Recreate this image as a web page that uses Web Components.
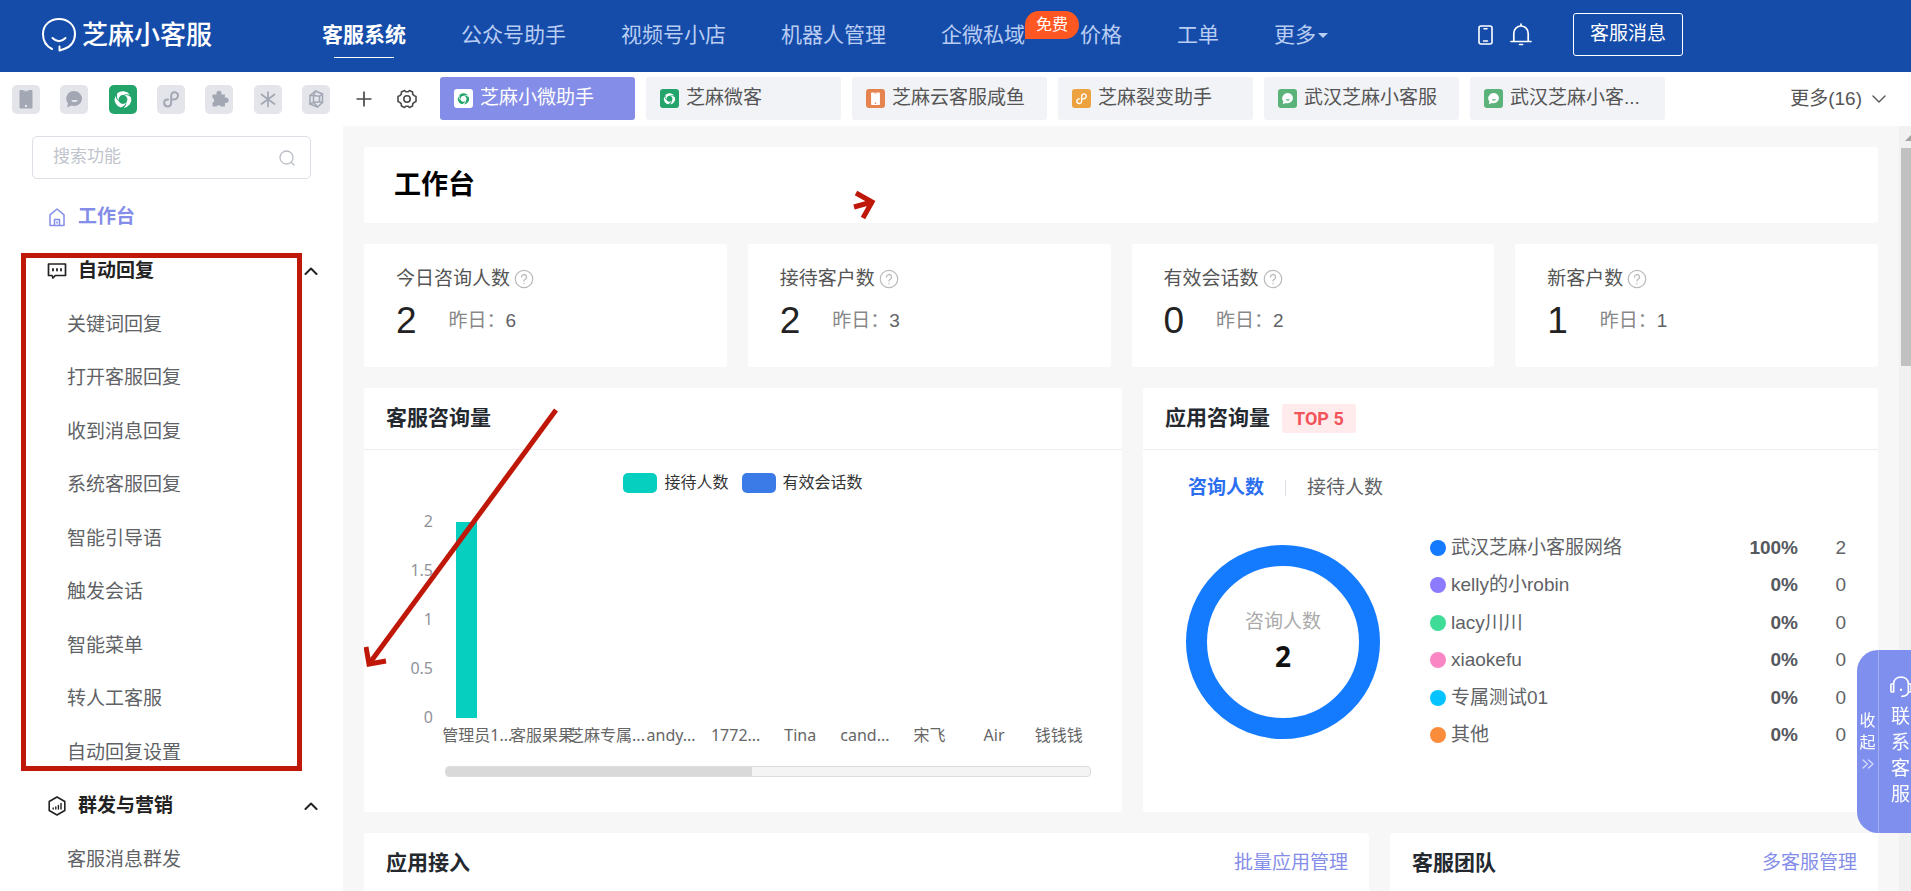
<!DOCTYPE html>
<html lang="zh-CN">
<head>
<meta charset="utf-8">
<title>芝麻小客服</title>
<style>
  html, body { margin: 0; height: 100%; }
  body {
    overflow: hidden;
    background: #fff;
    color: #606266;
    font-family: "Liberation Sans", "Noto Sans CJK SC", sans-serif;
    font-size: 19px;
    line-height: 24px;
  }
</style>
</head>
<body>
<desk-app></desk-app>

<script>
const base = `<style>
  *, *::before, *::after { box-sizing: border-box; }
  a { color: inherit; text-decoration: none; }
  ul { list-style: none; margin: 0; padding: 0; }
  h1, h2, p { margin: 0; font-size: inherit; font-weight: inherit; }
  button, input { font: inherit; color: inherit; background: none; border: 0; padding: 0; margin: 0; }
</style>`;

function define(name, html, setup) {
  const template = document.createElement('template');
  template.innerHTML = base + html;
  customElements.define(name, class extends HTMLElement {
    constructor() {
      super();
      this.attachShadow({ mode: 'open' }).append(template.content.cloneNode(true));
    }
    connectedCallback() { if (setup) setup(this, this.shadowRoot); }
  });
}

/* ---------- icons ---------- */
const stroke = (w) => `fill="none" stroke="currentColor" stroke-width="${w}" stroke-linecap="round" stroke-linejoin="round"`;
const blade = (turn) => `<path transform="rotate(${turn})" d="M-4.300 .8Q-6.700-1-5.900-5.900A8.400 8.400 0 0 1 6.900-4.800Q3-6.100 .6-4.400A4.400 4.400 0 0 0-4.300 .8Z"/>`;
const icons = {
  logo: [34, 34, `<path ${stroke(2)} d="M10 31C4 28 1 22 1 16C1 7 8 1 17 1S33 7 33 16C33 23 29 29 22 31L17.500 32.500V28.500"/><path ${stroke(2)} d="M10.500 20Q17 26.500 23.500 20"/>`],
  phone: [28, 28, `<rect x="7.500" y="5" width="13" height="18.500" rx="1" fill="currentColor"/><path d="M11.500 5.800h5" stroke="var(--hole)" stroke-width="1"/><circle cx="14" cy="21" r="1.200" fill="var(--hole)"/>`],
  bubble: [28, 28, `<path fill="currentColor" d="M14.500 6a8 7.500 0 1 1-3 14.600L7 22.500l1-4.300A8 7.500 0 0 1 14.500 6z"/><path fill="var(--hole)" d="M11.500 15h6a3 2.200 0 0 1-6 0z"/>`],
  swirl: [28, 28, `<g fill="currentColor" transform="translate(14 14.500)">${blade(0)}${blade(120)}${blade(240)}</g>`],
  link: [28, 28, `<path ${stroke(2)} d="M16 14.500C22 14.500 22.500 8 18 7.200C15.500 7 14.200 8.500 14.200 11V17.500C14.200 20 12.800 21.600 10.300 21.400C6 20.800 6 14.500 11 14.500"/>`],
  puzzle: [28, 28, `<path fill="currentColor" d="M7.500 9.500h4.200a2.600 2.600 0 1 1 4.600 0h3.600v3.300a2.700 2.700 0 1 1 0 4.900V21.500h-4.200a2.300 2.300 0 0 0-4 0H7.500v-3.800a2.400 2.400 0 0 0 0-4.600z"/>`],
  star: [28, 28, `<path ${stroke(1.7)} d="M14 7v14.500M7.500 9.500l13 9.500M7.500 19l13-9.500"/>`],
  cube: [28, 28, `<g ${stroke(1.5)}><path d="M13.500 6l7 3v8.500l-5 4.500-7.500-3V10.500z"/><path d="M11.500 10.500l6 .8v5.500l-6 .5zM13.500 6l-2 4.500M20.500 9l-3 2.300M20.500 17.500l-3-.7M15.500 22l-4-4.700M8 19l3.500-1.700M8 10.500h3.500"/></g>`],
  plus: [16, 16, `<path stroke="currentColor" stroke-width="1.700" d="M8 .5v15M.5 8h15"/>`],
  gear: [20, 20, `<path ${stroke(1.6)} d="M7.600 1.500L8.800 2.700H11.200L12.400 1.500L15.600 3L15.700 5.200L17.200 6.600L19 7.500V12.500L17.200 13.400L15.700 14.800L15.600 17L12.400 18.500L11.200 17.300H8.800L7.600 18.500L4.400 17L4.300 14.800L2.800 13.400L1 12.500V7.500L2.800 6.600L4.300 5.200L4.400 3Z"/><circle cx="10" cy="10" r="3.200" ${stroke(1.6)}/>`],
  search: [16, 16, `<circle cx="7.500" cy="7.500" r="6.500" ${stroke(1.3)}/><path ${stroke(1.3)} d="M12.200 12.200l2.800 2.800"/>`],
  home: [20, 20, `<path ${stroke(1.5)} d="M3 18.500V7.800L10 2l7 5.800v10.700zM7.500 18.500v-6h5v6M10 15v1"/>`],
  chat: [20, 18, `<path ${stroke(1.7)} d="M1.500 2h17v11.500H8.200L6 16l-1-2.500H1.500z"/><path ${stroke(1.8)} d="M6 7v1.500M10 7v1.500M14 7v1.500" />`],
  hexagon: [20, 20, `<path ${stroke(1.6)} d="M10 1l7.800 4.500v9L10 19l-7.800-4.500v-9z"/><path ${stroke(1.4)} d="M6.200 12v1M8.800 11v2M11.400 9.500v3.500M14 7.500v5.500"/>`],
  up: [14, 8, `<path ${stroke(2)} d="M1.500 7L7 1.500 12.500 7"/>`],
  down: [14, 8, `<path ${stroke(1.4)} d="M1 1l6 6 6-6"/>`],
  mobile: [15, 20, `<rect x="1" y="1" width="13" height="18" rx="2" ${stroke(1.6)}/><path ${stroke(1.5)} d="M6 3.800h3M5.500 16h4"/>`],
  bell: [22, 23, `<path ${stroke(1.7)} d="M1 18.500H21M3.800 18.500V10.500C3.800 6 7 3 11 3s7.200 3 7.200 7.500v8M11 3V1M9.500 21.500h3"/>`],
  help: [20, 20, `<circle cx="10" cy="10" r="8.700" ${stroke(1.2)}/><path ${stroke(1.3)} d="M7.500 8a2.500 2.500 0 1 1 3.700 2.200c-.8.500-1.200.9-1.200 1.800M10 14.500v.2"/>`],
  headset: [24, 24, `<path ${stroke(1.8)} d="M4 8.500C4 4 7.500 1.200 12 1.200S20 4 20 8.500M4 8.500H2.500a1.500 1.500 0 0 0-1.500 1.500v6a1.500 1.500 0 0 0 1.500 1.500H4zM20 8.500h1.500a1.500 1.500 0 0 1 1.500 1.500v6a1.500 1.500 0 0 1-1.500 1.500H20zM20 17.500C19.500 20.500 17 22 13 22.300"/><circle cx="12" cy="15" r="1.300" fill="currentColor"/>`],
  collapse: [12, 10, `<path ${stroke(1.2)} d="M1 1l4.500 4L1 9M6.500 1L11 5 6.500 9"/>`]
};
define('ui-icon', `<style>
  :host { display: inline-block; flex: none; --hole: #e3e5eb; }
  svg { display: block; width: 100%; height: 100%; }
</style><div></div>`, (el, root) => {
  const [w, h, body] = icons[el.getAttribute('name')];
  const size = Number(el.getAttribute('size')) || w;
  el.style.width = size + 'px';
  root.querySelector('div').innerHTML = `<svg viewBox="0 0 ${w} ${h}" aria-hidden="true">${body}</svg>`;
});

/* ---------- top bar ---------- */
define('nav-item', `<style>
  :host { display: block; position: relative; color: #b9cdf3; font-size: 21px; white-space: nowrap; }
  a { display: flex; align-items: center; height: 72px; padding-bottom: 2px; }
  :host([current]) { color: #fff; font-weight: 700; }
  :host([current])::after { content: ""; position: absolute; left: 12px; right: 12px; top: 57px; height: 1px; background: #fff; }
  ::slotted([slot=badge]) {
    position: absolute; left: 100%; top: 11px; height: 28px; padding: 0 11px; border-radius: 14px 14px 14px 0;
    background: #ff5722; color: #fff; font-size: 16px; line-height: 28px; z-index: 1;
  }
  :host([caret]) a::after { content: ""; border: 5px solid transparent; border-top-color: currentColor; border-bottom: 0; margin-left: 2px; }
</style><a href="#"><slot></slot></a><slot name="badge"></slot>`);

define('app-header', `<style>
  :host { display: flex; align-items: center; height: 72px; flex: none; background: #154ca9; color: #fff; padding: 0 42px; }
  .logo { display: flex; align-items: center; gap: 6px; font-size: 26px; font-weight: 500; width: 280px; padding-bottom: 2px; flex: none; white-space: nowrap; }
  nav { display: flex; gap: 55px; flex: none; }
  .tools { display: flex; align-items: center; gap: 17px; margin-left: 150px; padding-bottom: 3px; }
  button { width: 110px; height: 43px; border: 1px solid #fff; border-radius: 3px; margin-left: 24px; line-height: 20px; padding-bottom: 1px; }
</style>
<a class="logo" href="#"><ui-icon name="logo"></ui-icon>芝麻小客服</a>
<nav>
  <nav-item current>客服系统</nav-item>
  <nav-item>公众号助手</nav-item>
  <nav-item>视频号小店</nav-item>
  <nav-item>机器人管理</nav-item>
  <nav-item>企微私域<span slot="badge">免费</span></nav-item>
  <nav-item>价格</nav-item>
  <nav-item>工单</nav-item>
  <nav-item caret>更多</nav-item>
</nav>
<div class="tools">
  <ui-icon name="mobile"></ui-icon><ui-icon name="bell"></ui-icon>
  <button type="button">客服消息</button>
</div>`);

/* ---------- application tabs ---------- */
define('app-tile', `<style>
  :host { display: grid; place-items: center; width: 28px; height: 29px; border-radius: 5px; background: #e3e5eb; color: #a2a7b3; }
  :host([active]) { background: #22a46a; color: #fff; }
</style><div></div>`, (el, root) => {
  root.querySelector('div').innerHTML = `<ui-icon name="${el.getAttribute('icon')}"></ui-icon>`;
});

define('app-tab', `<style>
  :host { display: block; width: 195px; flex: 0 1 auto; min-width: 0; }
  a { display: flex; align-items: center; gap: 7px; height: 43px; padding: 0 14px; border-radius: 3px; background: #f2f3f7; color: #555; white-space: nowrap; }
  .mark { display: grid; place-items: center; width: 19px; height: 19px; border-radius: 3px; flex: none; background: var(--tone); color: #fff; }
  ui-icon { --hole: var(--tone); }
  .text { padding-bottom: 2px; }
  :host([active]) a { background: #848de7; color: #fff; }
  :host([active]) .mark { background: #fff; color: #22a46a; }
</style><a href="#"><span class="mark"></span><span class="text"><slot></slot></span></a>`, (el, root) => {
  el.style.setProperty('--tone', el.getAttribute('tone'));
  root.querySelector('.mark').innerHTML = `<ui-icon name="${el.getAttribute('icon')}" size="19"></ui-icon>`;
});

define('tab-bar', `<style>
  :host { display: flex; align-items: center; height: 54px; flex: none; background: #fff; padding: 0 25px 0 12px; }
  .tiles { display: flex; justify-content: space-between; width: 318px; flex: none; }
  .tools { display: flex; align-items: center; gap: 25px; margin: 0 23px 0 26px; color: #4a4a4a; flex: none; }
  .tools button { display: flex; }
  .tabs { display: flex; gap: 11px; flex: none; padding-bottom: 1px; }
  .more { display: flex; align-items: center; gap: 10px; margin-left: auto; color: #555; white-space: nowrap; }
</style>
<div class="tiles">
  <app-tile icon="phone"></app-tile><app-tile icon="bubble"></app-tile><app-tile icon="swirl" active></app-tile>
  <app-tile icon="link"></app-tile><app-tile icon="puzzle"></app-tile><app-tile icon="star"></app-tile><app-tile icon="cube"></app-tile>
</div>
<div class="tools">
  <button type="button" aria-label="添加"><ui-icon name="plus"></ui-icon></button>
  <button type="button" aria-label="设置"><ui-icon name="gear"></ui-icon></button>
</div>
<div class="tabs">
  <app-tab active icon="swirl" tone="#fff">芝麻小微助手</app-tab>
  <app-tab icon="swirl" tone="#22a46a">芝麻微客</app-tab>
  <app-tab icon="phone" tone="#e6844f">芝麻云客服咸鱼</app-tab>
  <app-tab icon="link" tone="#eba23f">芝麻裂变助手</app-tab>
  <app-tab icon="bubble" tone="#5cb37a">武汉芝麻小客服</app-tab>
  <app-tab icon="bubble" tone="#5cb37a">武汉芝麻小客...</app-tab>
</div>
<a class="more" href="#">更多(16)<ui-icon name="down"></ui-icon></a>`);

/* ---------- sidebar ---------- */
define('side-group', `<style>
  :host { display: block; }
  a { display: flex; align-items: center; height: 54px; padding: 0 25px 3px 47px; color: #222; font-weight: 700; }
  .icon { width: 31px; display: flex; }
  .fold { margin-left: auto; display: flex; }
  :host([current]) a { color: #848de7; }
</style><a href="#"><span class="icon"></span><slot></slot><span class="fold"></span></a>`, (el, root) => {
  root.querySelector('.icon').innerHTML = `<ui-icon name="${el.getAttribute('icon')}"></ui-icon>`;
  if (!el.hasAttribute('current')) root.querySelector('.fold').innerHTML = '<ui-icon name="up"></ui-icon>';
});

define('side-bar', `<style>
  :host { display: block; position: relative; width: 343px; flex: none; background: #fff; overflow: hidden; padding-top: 10px; }
  label { display: flex; align-items: center; height: 43px; margin: 0 32px 12px; padding: 0 15px 0 20px; border: 1px solid #dcdfe6; border-radius: 5px; color: #b9bdc6; }
  input { flex: 1; min-width: 0; font-size: 17px; outline: 0; height: 40px; padding-bottom: 1px; }
  input::placeholder { color: #c0c4cc; opacity: 1; }
  li a { display: flex; align-items: center; height: 53px; padding: 0 0 2px 67px; }
  li:nth-child(even) a { height: 54px; }
  .mark { position: absolute; left: 21px; top: 127px; width: 281px; height: 518px; border: 5px solid #bf1809; pointer-events: none; }
</style>
<label><input type="text" placeholder="搜索功能" aria-label="搜索功能"><ui-icon name="search"></ui-icon></label>
<nav>
  <side-group current icon="home">工作台</side-group>
  <side-group icon="chat">自动回复</side-group>
  <ul>
    <li><a href="#">关键词回复</a></li><li><a href="#">打开客服回复</a></li><li><a href="#">收到消息回复</a></li>
    <li><a href="#">系统客服回复</a></li><li><a href="#">智能引导语</a></li><li><a href="#">触发会话</a></li>
    <li><a href="#">智能菜单</a></li><li><a href="#">转人工客服</a></li><li><a href="#">自动回复设置</a></li>
  </ul>
  <side-group icon="hexagon">群发与营销</side-group>
  <ul><li><a href="#">客服消息群发</a></li></ul>
</nav>
<div class="mark"></div>`);

/* ---------- dashboard ---------- */
define('stat-card', `<style>
  :host { display: block; background: #fff; border-radius: 3px; padding: 21px 32px 0; height: 123px; }
  .label { display: flex; align-items: center; gap: 4px; height: 28px; color: #555; }
  .label ui-icon { color: #bbb; }
  .row { display: flex; align-items: center; height: 50px; line-height: 50px; gap: 32px; margin-top: 3px; }
  .value { font-size: 37px; color: #222; }
  .prev { color: #888; }
  .prev b { font-weight: 400; color: #606266; }
</style>
<div class="label"><span><slot></slot></span><ui-icon name="help"></ui-icon></div>
<div class="row"><span class="value"></span><span class="prev">昨日：<b></b></span></div>`, (el, root) => {
  root.querySelector('.value').textContent = el.getAttribute('value');
  root.querySelector('b').textContent = el.getAttribute('previous');
});

define('panel-card', `<style>
  :host { display: block; background: #fff; border-radius: 3px; min-width: 0; }
  header { display: flex; align-items: center; height: 62px; padding: 0 21px 0 22px; border-bottom: 1px solid #ebeef2; }
  h2 { font-size: 21px; font-weight: 700; color: #24292f; padding-bottom: 2px; white-space: nowrap; }
  ::slotted([slot=tag]) { margin-left: 12px; padding: 0 12px; height: 29px; border-radius: 3px; background: #ffebeb; color: #f2545b; font: 700 18px/29px Roboto, sans-serif; }
  ::slotted([slot=action]) { margin-left: auto; white-space: nowrap; padding-bottom: 2px; }
</style>
<header><h2><slot name="title"></slot></h2><slot name="tag"></slot><slot name="action"></slot></header>
<slot></slot>`);

define('bar-chart', `<style>
  :host { display: block; padding: 21px 31px 35px 0; font-family: "Noto Sans", "Noto Sans CJK SC", sans-serif; font-size: 16px; color: #666; }
  .legend { display: flex; justify-content: center; gap: 13px; padding-left: 31px; color: #333; }
  .legend span { display: flex; align-items: center; gap: 7px; height: 24px; }
  .legend i { width: 34px; height: 20px; border-radius: 5px; background: var(--c); }
  .legend b { font-weight: 400; padding-bottom: 2px; }
  .chart { display: grid; grid-template-columns: 69px 1fr; column-gap: 12px; margin-top: 27px; }
  .y { display: flex; flex-direction: column; justify-content: space-between; height: 220px; margin: -13px 0 -11px; text-align: right; color: #909399; }
  .plot { display: grid; grid-template-columns: repeat(10, 1fr); height: 196px; align-items: end; }
  .bar { width: 21px; margin-left: 11px; background: #06cfc0; }
  .x { grid-column: 2; display: grid; grid-template-columns: repeat(10, minmax(0, 1fr)); margin-top: 5px; }
  .x span { display: flex; justify-content: center; white-space: nowrap; }
  .scroll { grid-column: 2; height: 11px; margin-top: 19px; border: 1px solid #ddd; border-radius: 4px; background: #f4f4f4; overflow: hidden; }
  .scroll i { display: block; width: 47.500%; height: 100%; background: #d9d9d9; }
</style>
<div class="legend"><span style="--c:#06cfc0"><i></i><b>接待人数</b></span><span style="--c:#3b7be8"><i></i><b>有效会话数</b></span></div>
<div class="chart">
  <div class="y"><span>2</span><span>1.5</span><span>1</span><span>0.5</span><span>0</span></div>
  <div class="plot"></div>
  <div class="x"></div>
  <div class="scroll"><i></i></div>
</div>`, (el, root) => {
  const data = [['管理员1...', 2], ['客服果果', 0], ['芝麻专属...', 0], ['andy...', 0], ['1772...', 0], ['Tina', 0], ['cand...', 0], ['宋飞', 0], ['Air', 0], ['钱钱钱', 0]];
  root.querySelector('.plot').innerHTML = data.map(d => `<div class="bar" style="height:${d[1] * 98}px"></div>`).join('');
  root.querySelector('.x').innerHTML = data.map(d => `<span>${d[0]}</span>`).join('');
});

define('donut-panel', `<style>
  :host { display: block; padding: 26px 32px 0 43px; }
  .tabs { display: flex; align-items: center; gap: 21px; padding-left: 2px; }
  .tabs button { line-height: 24px; cursor: pointer; }
  .tabs button[aria-selected=true] { color: #2b6ff0; font-weight: 700; }
  .tabs i { width: 1px; height: 16px; background: #dcdfe6; }
  .body { display: flex; align-items: center; gap: 50px; margin-top: 29px; }
  .ring { display: flex; flex-direction: column; align-items: center; justify-content: center; gap: 5px; width: 194px; height: 194px; border: 21px solid #147bff; border-radius: 50%; color: #aaa; flex: none; }
  .ring b { color: #111; font: 700 28px/34px "Noto Sans", sans-serif; }
  table { flex: 1; border-collapse: collapse; }
  td { height: 37px; padding: 0; }
  tr:nth-child(even) td { height: 38px; }
  td:first-child i { display: inline-block; width: 16px; height: 16px; border-radius: 50%; background: var(--c); margin-right: 5px; vertical-align: -2px; }
  td:nth-child(2) { text-align: right; font-weight: 700; color: #55585e; }
  td:nth-child(3) { text-align: right; width: 48px; }
</style>
<div class="tabs" role="tablist"><button type="button" role="tab" aria-selected="true">咨询人数</button><i></i><button type="button" role="tab" aria-selected="false">接待人数</button></div>
<div class="body">
  <div class="ring"><span>咨询人数</span><b>2</b></div>
  <table><tbody></tbody></table>
</div>`, (el, root) => {
  const rows = [['#147bff', '武汉芝麻小客服网络', '100%', 2], ['#8c7bff', 'kelly的小robin', '0%', 0], ['#3fdc98', 'lacy川川', '0%', 0], ['#fa87c4', 'xiaokefu', '0%', 0], ['#05c3ff', '专属测试01', '0%', 0], ['#fb8c3c', '其他', '0%', 0]];
  root.querySelector('tbody').innerHTML = rows.map(r => `<tr><td><i style="--c:${r[0]}"></i>${r[1]}</td><td>${r[2]}</td><td>${r[3]}</td></tr>`).join('');
});

define('work-bench', `<style>
  :host { display: flex; flex-direction: column; gap: 21px; flex: 1; min-width: 0; position: relative; padding: 21px; background: #f7f7f7; overflow: hidden; }
  .title { display: flex; align-items: center; height: 76px; flex: none; padding: 0 30px; background: #fff; border-radius: 3px; }
  h1 { font-size: 27px; line-height: 36px; font-weight: 700; color: #000; }
  a[slot=action] { color: #848de7; }
  .stats { display: grid; grid-template-columns: repeat(4, 1fr); gap: 21px; }
  .charts { display: grid; grid-template-columns: 758fr 735fr; gap: 21px; }
  .lists { display: grid; grid-template-columns: 1005fr 488fr; gap: 21px; height: 300px; flex: none; }
  .marks { position: absolute; left: 21px; top: 0; width: 600px; height: 600px; pointer-events: none; }
</style>
<div class="title"><h1>工作台</h1></div>
<div class="stats">
  <stat-card value="2" previous="6">今日咨询人数</stat-card>
  <stat-card value="2" previous="3">接待客户数</stat-card>
  <stat-card value="0" previous="2">有效会话数</stat-card>
  <stat-card value="1" previous="1">新客户数</stat-card>
</div>
<div class="charts">
  <panel-card><span slot="title">客服咨询量</span><bar-chart></bar-chart></panel-card>
  <panel-card><span slot="title">应用咨询量</span><span slot="tag">TOP 5</span><donut-panel></donut-panel></panel-card>
</div>
<div class="lists">
  <panel-card><span slot="title">应用接入</span><a slot="action" href="#">批量应用管理</a></panel-card>
  <panel-card><span slot="title">客服团队</span><a slot="action" href="#">多客服管理</a></panel-card>
</div>
<svg class="marks" viewBox="0 0 600 600" fill="none" stroke="#bf1809" aria-hidden="true">
  <path stroke-width="5" d="M192 284L5 538"/>
  <path stroke-width="5" d="M2 521L5 538L22 535" stroke-miterlimit="8"/>
  <path stroke-width="5" d="M492 67L508 76L499 92M490 81L508 76"/>
</svg>`);

define('page-scroll', `<style>
  :host { display: flex; flex-direction: column; width: 12px; flex: none; background: #f1f1f1; overflow: hidden; padding-left: 2px; }
  .arrow { width: 16px; height: 22px; display: flex; align-items: center; padding: 2px 0 0 4px; }
  .arrow::before { content: ""; border: 6px solid transparent; border-top: 0; border-bottom-color: #a3a3a3; }
  .thumb { height: 218px; background: #c1c1c1; }
</style><div class="arrow"></div><div class="thumb"></div>`);

define('contact-dock', `<style>
  :host { display: flex; position: fixed; right: 0; top: 650px; height: 183px; width: 54px; border-radius: 21px 0 0 21px; background: #7f8fee; color: #fff; overflow: hidden; text-align: center; }
  button { display: flex; flex-direction: column; align-items: center; cursor: pointer; }
  .fold { width: 22px; flex: none; padding-top: 60px; font-size: 16px; line-height: 22px; border-right: 1px solid #a3aff5; }
  .fold ui-icon { margin-top: 5px; opacity: .7; }
  .talk { width: 44px; flex: none; padding: 26px 13px 0 12px; line-height: 26px; }
  .talk ui-icon { margin-bottom: 6px; }
</style>
<button class="fold" type="button"><span>收</span><span>起</span><ui-icon name="collapse"></ui-icon></button>
<button class="talk" type="button"><ui-icon name="headset" size="22"></ui-icon><span>联</span><span>系</span><span>客</span><span>服</span></button>`);

define('desk-app', `<style>
  :host { display: flex; flex-direction: column; height: 100vh; }
  main { display: flex; flex: 1; min-height: 0; }
</style>
<app-header></app-header>
<tab-bar></tab-bar>
<main><side-bar></side-bar><work-bench></work-bench><page-scroll></page-scroll></main>
<contact-dock></contact-dock>`);
</script>
</body>
</html>
